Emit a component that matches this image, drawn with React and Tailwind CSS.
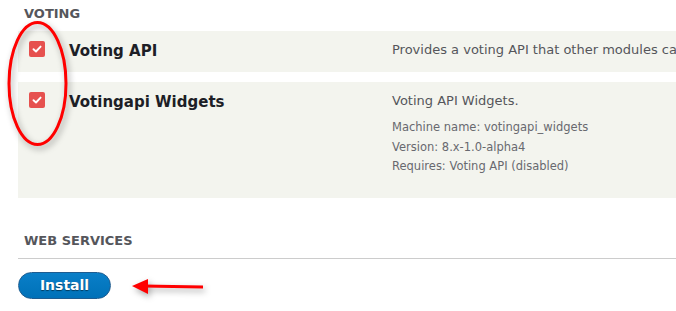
import React from 'react'

const font = { fontFamily: '"DejaVu Sans", "Liberation Sans", sans-serif' }

function Check() {
  return (
    <div className="flex h-[16px] w-[16px] items-center justify-center rounded-[2px] bg-[#e6514f]">
      <svg width="10" height="8" viewBox="0 0 10 8" fill="none">
        <path d="M1.5 4.2 L4 6.5 L8.6 1.6" stroke="white" strokeWidth="1.9" strokeLinecap="round" strokeLinejoin="round" />
      </svg>
    </div>
  )
}

function ModuleRow({ title, desc, details }) {
  return (
    <div className="flex h-full bg-[#f3f4ee] pl-[11px] pt-[10px]">
      <div className="w-[40px] shrink-0">
        <Check />
      </div>
      <div className="w-[323px] shrink-0 text-[15px] font-bold leading-[20px] text-[#1d1e26]">{title}</div>
      <div className="whitespace-nowrap pt-[1px]">
        <div className="text-[13px] leading-[16px] text-[#55565b]">{desc}</div>
        {details && (
          <div className="mt-[9px] text-[11.5px] leading-[19.5px] text-[#68696e]">
            {details.map((d) => (
              <div key={d}>{d}</div>
            ))}
          </div>
        )}
      </div>
    </div>
  )
}

export default function App() {
  return (
    <div style={font} className="relative h-[311px] w-[676px] overflow-hidden bg-white pl-[18px]">
      <div className="h-[31px] pl-[6px] pt-[6px] text-[13px] font-bold uppercase leading-[16px] text-[#55565b]">Voting</div>

      <div className="flex flex-col gap-[10px]">
        <div className="h-[41px] overflow-hidden">
          <ModuleRow title="Voting API" desc="Provides a voting API that other modules can use." />
        </div>
        <div className="h-[116px]">
          <ModuleRow
            title="Votingapi Widgets"
            desc="Voting API Widgets."
            details={['Machine name: votingapi_widgets', 'Version: 8.x-1.0-alpha4', 'Requires: Voting API (disabled)']}
          />
        </div>
      </div>

      <div className="mt-[35px] border-b border-[#cccccc] pb-[9px] pl-[6px] text-[13px] font-bold uppercase leading-[16px] text-[#55565b]">
        Web services
      </div>

      <div className="mt-[13px]">
        <button className="h-[27px] w-[93px] rounded-full border border-[#1e5c90] bg-gradient-to-b from-[#0a7fc8] to-[#0071b8] text-[14px] font-bold text-white [text-shadow:0_1px_1px_rgba(0,0,0,0.5)]">
          Install
        </button>
      </div>

      {/* annotation: red ellipse around checkboxes */}
      <svg className="absolute left-0 top-0" width="90" height="160" style={{ filter: 'drop-shadow(2px 3px 3px rgba(0,0,0,0.35))' }}>
        <ellipse cx="37.5" cy="83.5" rx="28.5" ry="61" fill="none" stroke="#ff0000" strokeWidth="3" />
      </svg>

      {/* annotation: red arrow pointing at button */}
      <svg className="absolute left-[123px] top-[272px]" width="90" height="30" style={{ filter: 'drop-shadow(2px 3px 3px rgba(0,0,0,0.35))' }}>
        <path d="M20 14 L80 15" stroke="#ff0000" strokeWidth="3" />
        <path d="M9 14 L25 7 L25 22 Z" fill="#ff0000" />
      </svg>
    </div>
  )
}
